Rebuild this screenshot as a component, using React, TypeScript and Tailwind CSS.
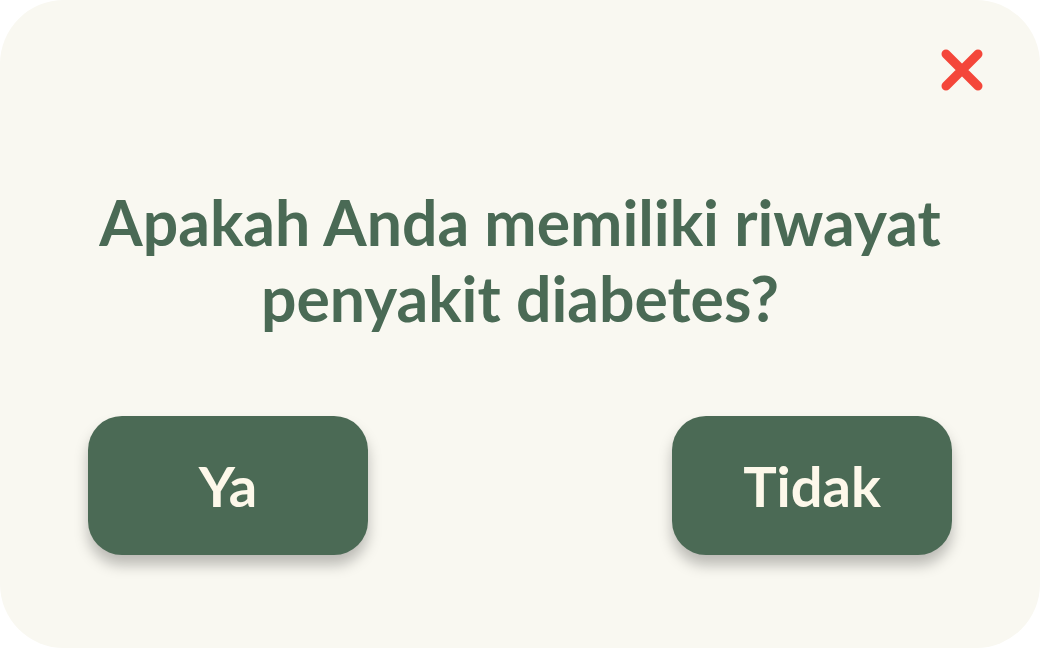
export default function App() {
  return (
    <div className="w-[1040px] h-[648px] bg-white">
      <div className="w-full h-full rounded-[64px] bg-[#f9f8f1] flex flex-col font-['Lato',_'Noto_Sans',_sans-serif]">
        <div className="flex justify-end pt-[48px] pr-[56px]">
          <button className="w-[44px] h-[44px]" aria-label="Tutup">
            <svg viewBox="0 0 44 44" className="w-[44px] h-[44px]">
              <path
                d="M6 6 L38 38 M38 6 L6 38"
                stroke="#f4463a"
                strokeWidth="9"
                strokeLinecap="round"
                fill="none"
              />
            </svg>
          </button>
        </div>
        <h1 className="mt-[92px] text-center text-[#4a6a55] text-[62.5px] leading-[76px] font-bold px-[80px]">
          Apakah Anda memiliki riwayat
          <br />
          penyakit diabetes?
        </h1>
        <div className="mt-[80px] flex justify-between pl-[88px] pr-[88px]">
          <button className="w-[280px] h-[139px] rounded-[34px] bg-[#4b6a55] text-[#fdf8ea] text-[56px] font-bold shadow-[0_10px_14px_rgba(0,0,0,0.25)]">
            Ya
          </button>
          <button className="w-[280px] h-[139px] rounded-[34px] bg-[#4b6a55] text-[#fdf8ea] text-[56px] font-bold shadow-[0_10px_14px_rgba(0,0,0,0.25)]">
            Tidak
          </button>
        </div>
      </div>
    </div>
  );
}
